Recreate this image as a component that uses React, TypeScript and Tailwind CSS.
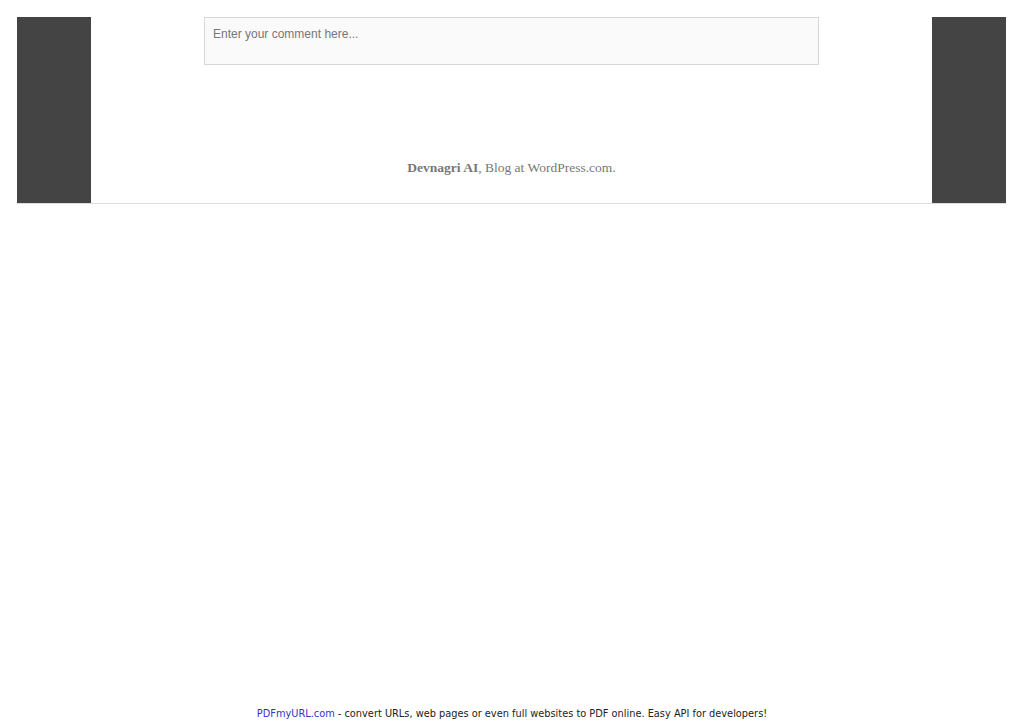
import React from 'react';

const SideBar: React.FC = () => <div className="w-[74px] shrink-0 bg-[#444444]" />;

export default function App() {
  return (
    <div className="relative h-[723px] w-[1024px] overflow-hidden bg-white">
      {/* Page frame */}
      <div className="pt-[17px] pl-[17px]">
        <div className="flex h-[187px] w-[989px] border-b border-[#dddddd]">
          <SideBar />
          <div className="flex flex-1 flex-col items-center">
            <div className="h-[48px] w-[615px] border border-[#d8d8d8] bg-[#fafafa] px-[8px] pt-[9px] font-['Liberation_Sans',Arial,sans-serif] text-[12px] leading-[15px] text-[#777777]">
              Enter your comment here...
            </div>
            <p className="mt-[94px] font-['Liberation_Serif','Times_New_Roman',serif] text-[13.5px] leading-[18px] text-[#777777]">
              <span className="font-bold">Devnagri AI</span>, Blog at WordPress.com.
            </p>
          </div>
          <SideBar />
        </div>
      </div>

      {/* PDF footer */}
      <div className="absolute bottom-[3px] left-0 right-0 text-center font-['DejaVu_Sans',Verdana,sans-serif] text-[9.8px] leading-[13px] text-[#222222]">
        <span className="text-[#3333cc]">PDFmyURL.com</span> - convert URLs, web pages or even full websites to PDF online. Easy API for developers!
      </div>
    </div>
  );
}
